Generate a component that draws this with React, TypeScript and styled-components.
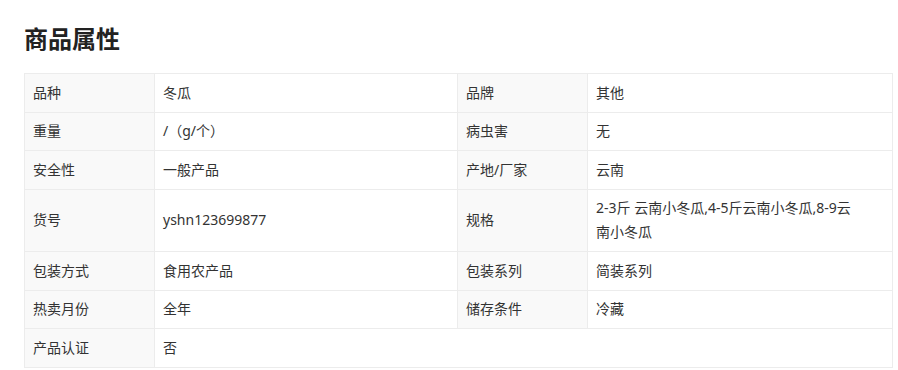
import React from "react";
import styled, { createGlobalStyle } from "styled-components";

const GlobalStyle = createGlobalStyle`
  html, body {
    margin: 0;
    padding: 0;
    background: #ffffff;
  }
  body {
    font-family: "Noto Sans", "Noto Sans CJK SC", sans-serif;
    color: #333333;
  }
`;

const Page = styled.div`
  padding: 21px 6px 0 24px;
`;

const Title = styled.h2`
  margin: 0 0 18px 0;
  font-family: "Noto Sans CJK SC", sans-serif;
  font-size: 24px;
  line-height: 34px;
  font-weight: 700;
  color: #222222;
`;

const Table = styled.table`
  width: 868px;
  border-collapse: collapse;
  table-layout: fixed;
  font-size: 14px;
  line-height: 24px;
`;

const Label = styled.th`
  box-sizing: border-box;
  padding: 6.75px 8px;
  text-align: left;
  font-weight: 400;
  background: #f9f9f9;
  border: 1px solid #ececec;
  color: #333333;
  vertical-align: middle;
`;

const Value = styled.td<{ $narrow?: boolean }>`
  padding: 6.75px ${(p) => (p.$narrow ? "34px" : "8px")} 6.75px 8px;
  border: 1px solid #ececec;
  color: #333333;
  vertical-align: middle;
  word-break: break-all;
`;

type Pair = [string, string];
const rows: Pair[][] = [
  [["品种", "冬瓜"], ["品牌", "其他"]],
  [["重量", "/（g/个）"], ["病虫害", "无"]],
  [["安全性", "一般产品"], ["产地/厂家", "云南"]],
  [["货号", "yshn123699877"], ["规格", "2-3斤 云南小冬瓜,4-5斤云南小冬瓜,8-9云南小冬瓜"]],
  [["包装方式", "食用农产品"], ["包装系列", "简装系列"]],
  [["热卖月份", "全年"], ["储存条件", "冷藏"]],
];

export default function App() {
  return (
    <Page>
      <GlobalStyle />
      <Title>商品属性</Title>
      <Table>
        <colgroup>
          <col style={{ width: 130 }} />
          <col style={{ width: 303 }} />
          <col style={{ width: 130 }} />
          <col style={{ width: 305 }} />
        </colgroup>
        <tbody>
          {rows.map((r, i) => (
            <tr key={i}>
              <Label>{r[0][0]}</Label>
              <Value>{r[0][1]}</Value>
              <Label>{r[1][0]}</Label>
              <Value $narrow={r[1][1].length > 20}>{r[1][1]}</Value>
            </tr>
          ))}
          <tr>
            <Label>产品认证</Label>
            <Value colSpan={3}>否</Value>
          </tr>
        </tbody>
      </Table>
    </Page>
  );
}
